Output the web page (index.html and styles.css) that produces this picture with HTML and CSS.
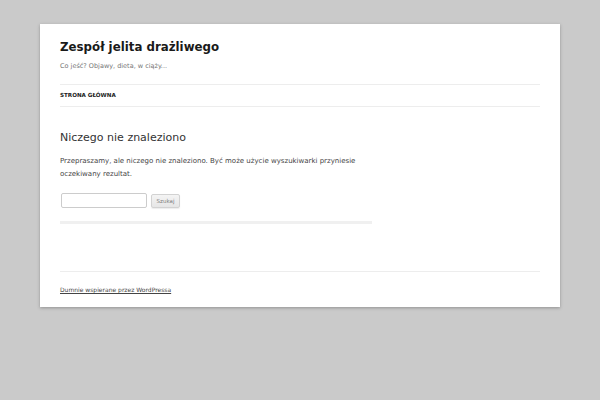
FILE: index.html
```html
<!DOCTYPE html>
<html lang="pl">
<head>
  <meta charset="UTF-8">
  <title>Nie znaleziono strony | Zespół jelita drażliwego</title>
  <link rel="stylesheet" href="styles.css">
</head>
<body>
  <div class="site">
    <header class="site-header">
      <h1 class="site-title"><a href="#">Zespół jelita drażliwego</a></h1>
      <h2 class="site-description">Co jeść? Objawy, dieta, w ciąży...</h2>

      <nav class="main-navigation">
        <ul>
          <li class="current-menu-item"><a href="#">Strona główna</a></li>
        </ul>
      </nav>
    </header>

    <div class="site-content">
      <article class="no-results">
        <header class="entry-header">
          <h1 class="entry-title">Niczego nie znaleziono</h1>
        </header>
        <div class="entry-content">
          <p>Przepraszamy, ale niczego nie znaleziono. Być może użycie wyszukiwarki przyniesie oczekiwany rezultat.</p>
          <form class="search-form">
            <input type="text" class="search-field">
            <button type="submit" class="search-submit">Szukaj</button>
          </form>
        </div>
      </article>
    </div>

    <footer class="site-footer">
      <a href="#">Dumnie wspierane przez WordPressa</a>
    </footer>
  </div>
</body>
</html>
```

FILE: styles.css
```css
/* Twenty Twelve look, half size */
html, body {
  margin: 0;
  padding: 0;
}

body {
  background-color: #cacaca;
  font-family: "DejaVu Sans", sans-serif;
  color: #444;
  padding: 24px 40px;
}

a {
  color: #444;
}

.site {
  background-color: #fff;
  padding: 0 20px;
  box-shadow: 0 1px 3px rgba(80, 80, 80, 0.45);
}

/* header */
.site-header {
  padding: 14px 0 12px;
}

.site-title {
  font-size: 11.8px;
  line-height: 18px;
  margin: 0 0 4px;
  font-weight: bold;
}

.site-title a {
  color: #1a1a1a;
  text-decoration: none;
}

.site-description {
  font-size: 6.5px;
  line-height: 12px;
  font-weight: normal;
  color: #757575;
  margin: 0;
}

.main-navigation {
  margin-top: 12px;
  border-top: 1px solid #ededed;
  border-bottom: 1px solid #ededed;
}

.main-navigation ul {
  list-style: none;
  margin: 0;
  padding: 0;
  display: flex;
  gap: 20px;
}

.main-navigation a {
  display: block;
  font-size: 5.6px;
  line-height: 21px;
  text-transform: uppercase;
  color: #6a6a6a;
  text-decoration: none;
}

.main-navigation .current-menu-item a {
  font-weight: bold;
  color: #222;
}

/* content */
.site-content {
  width: 65.104%;
  margin-top: 13px;
}

.no-results {
  border-bottom: 3px solid #f0f0f0;
  padding-bottom: 13px;
  margin-bottom: 47px;
}

.entry-header {
  margin-bottom: 11px;
}

.entry-title {
  font-size: 11px;
  font-weight: normal;
  line-height: 12px;
  color: #333;
  margin: 0;
}

.entry-content p {
  font-size: 7px;
  line-height: 13px;
  margin: 0 0 12px;
}

.search-form {
  display: flex;
  align-items: center;
  gap: 4px;
  height: 15px;
}

.search-field {
  box-sizing: border-box;
  width: 86px;
  height: 15px;
  margin: 0 0 0 1px;
  padding: 3px;
  border: 1px solid #ccc;
  border-radius: 2px;
  font-size: 7px;
}

.search-submit {
  box-sizing: border-box;
  width: 29px;
  height: 14px;
  padding: 0;
  font-family: "DejaVu Sans", sans-serif;
  font-size: 5.5px;
  line-height: 12px;
  color: #7c7c7c;
  border: 1px solid #d2d2d2;
  border-radius: 2px;
  background: linear-gradient(to bottom, #f4f4f4, #e6e6e6);
  box-shadow: 0 1px 1px rgba(64, 64, 64, 0.1);
}

/* footer */
.site-footer {
  margin-top: 12px;
  border-top: 1px solid #ededed;
  padding: 12px 0 11px;
  font-size: 6px;
  line-height: 12px;
}

.site-footer a {
  color: #444;
}
```
